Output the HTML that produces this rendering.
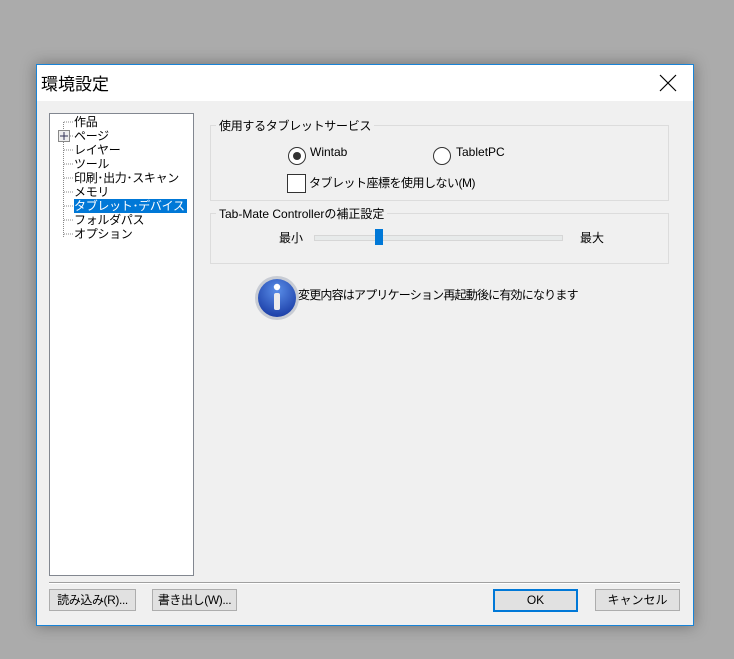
<!DOCTYPE html><html><head><meta charset="utf-8"><style>
body{margin:0;width:734px;height:659px;background:#ababab;position:relative;overflow:hidden;font-family:"Liberation Sans","Noto Sans CJK JP",sans-serif;font-size:12px;color:#000}
.a{position:absolute}
.win{left:36px;top:64px;width:656px;height:560px;border:1px solid #1883d7;background:#f0f0f0;box-shadow:0 0 14px rgba(0,0,0,.35)}
.title{left:0;top:0;width:656px;height:36px;background:#fff}
.gb{border:1px solid #dcdcdc}
.leg{background:#f0f0f0;padding:0 3px}
.btn{border:1px solid #adadad;background:#e1e1e1;text-align:center;line-height:20px;height:20px}
.tree div{position:absolute;left:24px;white-space:nowrap;line-height:14px;letter-spacing:-0.3px}
</style></head><body>
<div class="a win">
 <div class="a title"><div class="a" style="left:4px;top:5px;font-size:17px">環境設定</div>
 <svg class="a" style="left:622px;top:9px" width="18" height="18"><path d="M1 1L17 17M17 1L1 17" stroke="#000" stroke-width="1.2"/></svg></div>
 <div class="a" style="left:12px;top:48px;width:143px;height:461px;background:#fff;border:1px solid #828790">
  <svg class="a" style="left:0;top:0" width="40" height="130"><g stroke="#888" stroke-dasharray="1 1"><path d="M13.5 8V124M14 8H24M20 22H24M14 36H24M14 50H24M14 64H24M14 78H24M14 92H24M14 106H24M14 120H24"/></g><rect x="8.5" y="16.5" width="11" height="11" fill="#eee" stroke="#888"/><path d="M10 22H18M14 18V26" stroke="#335"/></svg>
  <div class="tree">
   <div style="top:1px">作品</div><div style="top:15px">ページ</div><div style="top:29px">レイヤー</div><div style="top:43px">ツール</div><div style="top:57px">印刷･出力･スキャン</div><div style="top:71px">メモリ</div><div style="top:85px;background:#0078d7;color:#fff;padding-right:2px">タブレット･デバイス</div><div style="top:99px">フォルダパス</div><div style="top:113px">オプション</div>
  </div>
 </div>
 <div class="a gb" style="left:173px;top:60px;width:457px;height:74px"></div>
 <div class="a leg" style="left:179px;top:52px;letter-spacing:-0.3px">使用するタブレットサービス</div>
 <svg class="a" style="left:250px;top:81px" width="20" height="20"><circle cx="10" cy="10" r="8.5" fill="#fff" stroke="#333"/><circle cx="10" cy="10" r="4" fill="#333"/></svg>
 <div class="a" style="left:273px;top:80px">Wintab</div>
 <svg class="a" style="left:395px;top:81px" width="20" height="20"><circle cx="10" cy="10" r="8.5" fill="#fff" stroke="#333"/></svg>
 <div class="a" style="left:419px;top:80px">TabletPC</div>
 <div class="a" style="left:250px;top:109px;width:17px;height:17px;border:1px solid #333;background:#fff"></div>
 <div class="a" style="left:272px;top:109px;letter-spacing:-0.5px">タブレット座標を使用しない(M)</div>
 <div class="a gb" style="left:173px;top:148px;width:457px;height:49px"></div>
 <div class="a leg" style="left:179px;top:140px">Tab-Mate Controllerの補正設定</div>
 <div class="a" style="left:242px;top:164px">最小</div>
 <div class="a" style="left:277px;top:170px;width:247px;height:4px;background:#e7eaea;border:1px solid #d6d6d6"></div>
 <div class="a" style="left:338px;top:164px;width:8px;height:16px;background:#0078d7"></div>
 <div class="a" style="left:543px;top:164px">最大</div>
 <svg class="a" style="left:216px;top:209px" width="48" height="48"><defs><radialGradient id="g" cx="50%" cy="30%" r="70%"><stop offset="0" stop-color="#5a8ee8"/><stop offset="1" stop-color="#1c3fa8"/></radialGradient></defs><circle cx="24" cy="24" r="22" fill="#c8ccd4"/><circle cx="24" cy="24" r="19" fill="url(#g)"/><circle cx="24" cy="13" r="3.2" fill="#fff"/><rect x="21" y="19" width="6" height="17" rx="2" fill="#ececec"/></svg>
 <div class="a" style="left:261px;top:221px;letter-spacing:-0.8px">変更内容はアプリケーション再起動後に有効になります</div>
 <div class="a" style="left:12px;top:517px;width:631px;height:1px;background:#a0a0a0;border-bottom:1px solid #fff"></div>
 <div class="a btn" style="left:12px;top:524px;width:85px;letter-spacing:-0.4px">読み込み(R)...</div>
 <div class="a btn" style="left:115px;top:524px;width:83px;letter-spacing:-0.4px">書き出し(W)...</div>
 <div class="a btn" style="left:456px;top:524px;width:81px;border:2px solid #0078d7;height:19px;line-height:19px">OK</div>
 <div class="a btn" style="left:558px;top:524px;width:83px">キャンセル</div>
</div>
</body></html>
